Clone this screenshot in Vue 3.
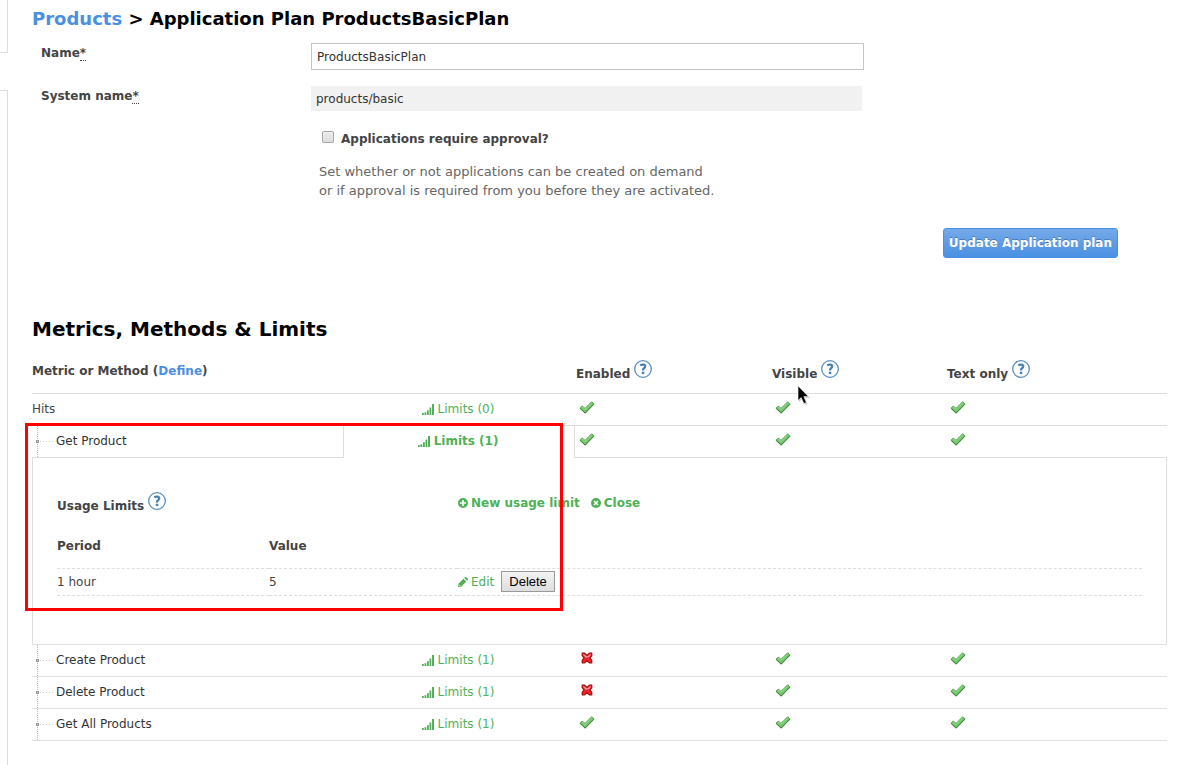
<script setup>
import { ref } from 'vue'

const planName = ref('ProductsBasicPlan')
const needsApproval = ref(false)

const columns = ['Enabled', 'Visible', 'Text only']

const metrics = [
  { name: 'Hits', limits: 0, child: false, open: false, flags: [true, true, true] },
  { name: 'Get Product', limits: 1, child: true, open: true, flags: [true, true, true] },
  { name: 'Create Product', limits: 1, child: true, open: false, flags: [false, true, true] },
  { name: 'Delete Product', limits: 1, child: true, open: false, flags: [false, true, true] },
  { name: 'Get All Products', limits: 1, child: true, open: false, flags: [true, true, true] },
]

const usageLimits = [{ period: '1 hour', value: 5 }]
</script>

<template>
  <div class="page">
    <svg class="defs" width="0" height="0" aria-hidden="true">
      <defs>
        <symbol id="tick" viewBox="0 0 16 13">
          <path d="M1 7.2 3.2 5 6 7.4 12.6 .8 15 2.8 6.2 11.8Z" fill="#74c56c" stroke="#5cab55" stroke-width="1" stroke-linejoin="round" />
          <path d="M1.2 7.6 6.2 12.2 15 3.2" fill="none" stroke="#34802f" stroke-width="1" />
          <path d="M3 6 6 8.6 12.6 2" fill="none" stroke="#97d890" stroke-width="1" />
        </symbol>
        <symbol id="cross" viewBox="0 0 12 12">
          <path d="M1.2 1.2H3.6L6 3.4 8.4 1.2H10.8V3.6L9 6 10.8 8.4V10.8H8.4L6 8.8 3.6 10.8H1.2V8.4L3 6 1.2 3.6Z" fill="#e8262a" stroke="#b0080e" stroke-width="1.2" stroke-linejoin="round" />
          <path d="M2.4 2.4 4.8 4.8H7.2L9.6 2.4" fill="none" stroke="#ff9a9a" stroke-width="1.3" />
        </symbol>
        <symbol id="help" viewBox="0 0 18 18">
          <circle cx="9" cy="9" r="8.3" fill="none" stroke="#5a8ebc" stroke-width="1.3" />
          <path d="M6.2 5.2Q7.8 4.6 9.2 4.7 11.3 4.9 11.2 6.5 11.1 7.5 10 8.2 9 8.9 9 10.6" fill="none" stroke="#4682b4" stroke-width="2.3" />
          <rect x="7.8" y="11.7" width="2.5" height="2.4" fill="#4682b4" />
        </symbol>
        <symbol id="signal" viewBox="0 0 12 11">
          <path d="M0 9h1.8v2H0zM2.5 8.2h1.8V11H2.5zM5 6.2h1.8V11H5zM7.5 3.4h1.8V11H7.5zM10 0h2v11h-2z" fill="#4eb157" />
        </symbol>
        <symbol id="plus" viewBox="0 0 10 10">
          <circle cx="5" cy="5" r="5" fill="#4eb157" />
          <path d="M5 2v6M2 5h6" stroke="#fff" stroke-width="1.7" />
        </symbol>
        <symbol id="close" viewBox="0 0 10 10">
          <circle cx="5" cy="5" r="5" fill="#4eb157" />
          <path d="M3 3l4 4M7 3 3 7" stroke="#fff" stroke-width="1.7" />
        </symbol>
        <symbol id="pencil" viewBox="0 0 10 10">
          <path d="M0 10 .6 6.6 5.5 1.7 8.3 4.5 3.4 9.4ZM6.2 1 7 .3Q7.8-.3 8.6.4L9.7 1.5Q10.3 2.2 9.7 3L9 3.8Z" fill="#4eb157" />
          <path d="M1 7.8 2.2 9" stroke="#fff" stroke-width=".7" />
        </symbol>
      </defs>
    </svg>

    <div class="rail" aria-hidden="true">
      <div class="rail-top"></div>
      <div class="rail-rest"></div>
    </div>

    <main class="main">
      <h1><a href="#">Products</a> &gt; Application Plan ProductsBasicPlan</h1>

      <form class="plan" @submit.prevent>
        <div class="row name-row">
          <label for="plan-name">Name<abbr title="required">*</abbr></label>
          <input id="plan-name" v-model="planName" type="text" class="text" />
        </div>
        <div class="row system-row">
          <label for="plan-system">System name<abbr title="required">*</abbr></label>
          <input id="plan-system" type="text" class="text locked" value="products/basic" readonly />
        </div>
        <div class="approval">
          <div class="check">
            <input id="approval" v-model="needsApproval" type="checkbox" />
            <label for="approval">Applications require approval?</label>
          </div>
          <p>Set whether or not applications can be created on demand<br />or if approval is required from you before they are activated.</p>
        </div>
        <div class="actions">
          <button type="submit" class="primary">Update Application plan</button>
        </div>
      </form>

      <h2>Metrics, Methods &amp; Limits</h2>

      <section class="metrics">
        <table class="grid">
          <colgroup>
            <col class="c-name" /><col class="c-limits" /><col class="c-enabled" /><col class="c-visible" /><col />
          </colgroup>
          <thead>
            <tr>
              <th colspan="2">Metric or Method (<a href="#">Define</a>)</th>
              <th v-for="c in columns" :key="c" class="flag-head">
                {{ c }} <svg class="help"><use href="#help" /></svg>
              </th>
            </tr>
          </thead>
          <tbody>
            <template v-for="m in metrics" :key="m.name">
              <tr :class="{ open: m.open }">
                <td :class="['name', { child: m.child }]">{{ m.name }}</td>
                <td class="limits">
                  <a href="#" class="green"><svg class="signal"><use href="#signal" /></svg>Limits ({{ m.limits }})</a>
                </td>
                <td v-for="(on, i) in m.flags" :key="i" class="flag">
                  <svg v-if="on" class="tick"><use href="#tick" /></svg>
                  <svg v-else class="cross"><use href="#cross" /></svg>
                </td>
              </tr>
              <tr v-if="m.open">
                <td colspan="5" class="panel">
                  <table class="usage">
                    <colgroup><col class="u-period" /><col class="u-value" /><col /></colgroup>
                    <thead>
                      <tr class="title">
                        <th colspan="2">Usage Limits <svg class="help"><use href="#help" /></svg></th>
                        <th>
                          <div class="links">
                            <a href="#" class="green"><svg class="mini"><use href="#plus" /></svg>New usage limit</a>
                            <a href="#" class="green"><svg class="mini"><use href="#close" /></svg>Close</a>
                          </div>
                        </th>
                      </tr>
                      <tr class="heads">
                        <th>Period</th>
                        <th>Value</th>
                        <th></th>
                      </tr>
                    </thead>
                    <tbody>
                      <tr v-for="u in usageLimits" :key="u.period">
                        <td>{{ u.period }}</td>
                        <td>{{ u.value }}</td>
                        <td>
                          <div class="edit">
                            <a href="#" class="green"><svg class="mini"><use href="#pencil" /></svg>Edit</a>
                            <button type="button" class="delete">Delete</button>
                          </div>
                        </td>
                      </tr>
                    </tbody>
                  </table>
                </td>
              </tr>
            </template>
          </tbody>
        </table>

        <div class="highlight" aria-hidden="true"></div>
        <svg class="pointer" viewBox="0 0 14 21" aria-hidden="true">
          <path d="M2 2V17L5.4 14 8 20 10.6 19 8 13H13Z" fill="#000" opacity=".2" />
          <path d="M1 .8V15.6L4.2 12.6 6.8 18.6 9.4 17.5 6.8 11.6H11.4Z" fill="#000" stroke="#fff" stroke-width=".6" />
        </svg>
      </section>
    </main>
  </div>
</template>

<style>
body {
  margin: 0;
  background: #fff;
}
</style>

<style scoped>
.page {
  display: flex;
  min-height: 100vh;
  box-sizing: border-box;
  font-family: "DejaVu Sans", Verdana, sans-serif;
  font-size: 12px;
  line-height: 18px;
  color: #444;
}
.defs { position: absolute; }
.rail {
  flex: 0 0 8px;
  display: flex;
  flex-direction: column;
  gap: 37px;
}
.rail-top, .rail-rest { border-right: 1px solid #dedede; }
.rail-top { height: 52px; border-bottom: 1px solid #dedede; }
.rail-rest { flex: 1; border-top: 1px solid #dedede; }
.main {
  flex: 1;
  min-width: 0;
  padding: 7px 18px 0 24px;
}
a { color: #4a90e2; text-decoration: none; }
h1, h2, p { margin: 0; }
h1 { font-size: 18px; line-height: 24px; color: #000; }
h2 { margin-top: 59px; font-size: 20px; line-height: 24px; color: #000; }

.plan { padding: 12px 9px 0; }
.row { display: grid; grid-template-columns: 270px minmax(0, 553px); }
.row label { padding-top: 1px; }
.row label, .check label { font-weight: bold; }
.name-row { margin-bottom: 16px; }
abbr { text-decoration: none; border-bottom: 1px dotted #444; display: inline-block; line-height: 13px; }
.text {
  box-sizing: border-box;
  width: 100%;
  height: 27px;
  padding: 0 5px;
  border: 1px solid #c4c4c4;
  font: inherit;
  color: #333;
  background: #fff;
  outline: none;
}
.text.locked { height: 25px; border: 0; background: #f1f1f1; }
.system-row .text { width: calc(100% - 2px); }
.approval { padding: 17px 0 0 278px; }
.check { display: flex; align-items: center; gap: 7px; padding-left: 3px; }
.check label { padding-top: 2px; }
.check input {
  appearance: none;
  box-sizing: border-box;
  width: 12px;
  height: 12px;
  margin: 0 0 2px;
  border: 1px solid #a8a8a8;
  border-radius: 2px;
  background: linear-gradient(#eee, #dcdcdc);
}
.approval p { margin-top: 14px; font-size: 13px; line-height: 19px; color: #666; }
.actions { display: flex; justify-content: flex-end; padding: 28px 40px 0 0; }
.primary {
  height: 30px;
  padding: 0 5px;
  border: 1px solid #4a90e2;
  border-radius: 3px;
  background: linear-gradient(#76a9e9, #4a90e2);
  color: #fff;
  font: bold 12px "DejaVu Sans", Verdana, sans-serif;
  text-shadow: 0 -1px 0 rgba(0, 0, 0, .25);
}

.metrics { position: relative; margin-top: 12px; }
table { width: 100%; table-layout: fixed; border-collapse: separate; border-spacing: 0; }
th, td { padding: 0; text-align: left; }
.c-name { width: 312px; }
.c-limits { width: 230px; }
.c-enabled { width: 196px; }
.c-visible { width: 175px; }
.grid > thead th { height: 36px; padding-bottom: 4px; vertical-align: middle; border-bottom: 1px solid #dedede; }
.grid > thead .flag-head { padding-left: 2px; }
.help { width: 18px; height: 18px; vertical-align: 0; }
.grid > tbody > tr > td { height: 31px; border-bottom: 1px solid #dedede; }
.grid > tbody > tr > .name, .grid > tbody > tr > .limits { height: 29px; padding-bottom: 2px; }
.green { color: #4eb157; }
.limits { text-align: center; }
.grid > tbody > tr > .limits { padding-right: 2px; }
.signal { width: 12px; height: 11px; margin-right: 4px; vertical-align: -2px; }
.name.child { position: relative; padding-left: 24px; color: #333; }
.name.child::before {
  content: "";
  position: absolute;
  left: 5px;
  top: 0;
  bottom: 0;
  border-left: 1px dotted #bbb;
}
.name.child::after {
  content: "";
  position: absolute;
  left: 4px;
  top: 14px;
  width: 17px;
  height: 3px;
  background:
    linear-gradient(#ccc, #ccc) 1px 1px / 1px 1px no-repeat,
    linear-gradient(#999, #999) 0 0 / 3px 3px no-repeat,
    repeating-linear-gradient(90deg, #ccc 0 1px, transparent 1px 3px) 4px 1px / 13px 1px no-repeat;
}
.flag { padding-left: 5px; }
.flag svg { display: block; }
.tick { width: 16px; height: 13px; margin-bottom: 4px; }
.cross { width: 12px; height: 12px; margin: 0 0 6px 2px; }
.grid > tbody > .open > .name { border-right: 1px solid #dedede; }
.grid > tbody > .open > .limits { border-bottom-color: transparent; font-weight: bold; }
.grid > tbody > .open > .limits + .flag { border-left: 1px solid #dedede; padding-left: 4px; }
.grid > tbody > tr > .panel {
  padding: 24px 24px 48px;
  border: solid #dedede;
  border-width: 0 1px 1px;
}
.u-period { width: 212px; }
.u-value { width: 188px; }
.title th { height: 43px; }
.links { display: flex; gap: 10px; padding-bottom: 2px; }
.heads th { height: 41px; padding-bottom: 2px; border-bottom: 1px dashed #dedede; }
.usage tbody td { height: 26px; border-bottom: 1px dashed #dedede; }
.mini { width: 10px; height: 10px; margin: 0 3px 0 1px; vertical-align: -1px; }
.links .mini, .edit .mini { overflow: visible; }
.edit { display: flex; align-items: center; gap: 7px; }
.delete {
  height: 21px;
  margin-bottom: 2px;
  padding: 0 7px;
  border: 1px solid #999;
  background: linear-gradient(#f3f3f3, #dedede);
  color: #000;
  font: 13px "Liberation Sans", Arial, sans-serif;
}
.highlight {
  position: absolute;
  left: -7px;
  top: 70px;
  width: 532px;
  height: 182px;
  border: 3px solid #f00;
  pointer-events: none;
}
.pointer {
  position: absolute;
  left: 765px;
  top: 32px;
  width: 14px;
  height: 21px;
  pointer-events: none;
}
</style>
